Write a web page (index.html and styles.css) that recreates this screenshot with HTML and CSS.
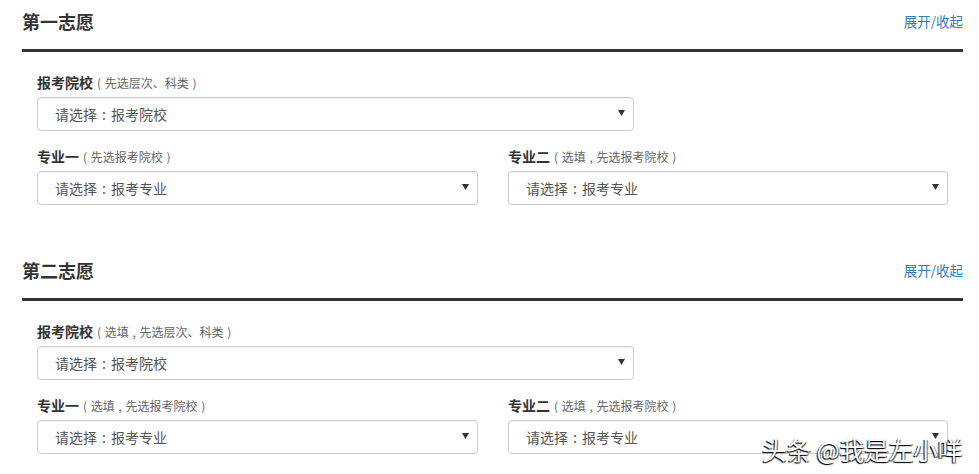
FILE: index.html
```html
<!DOCTYPE html>
<html lang="zh-CN">
<head>
<meta charset="utf-8">
<link rel="stylesheet" href="styles.css">
</head>
<body>
<div class="page">
  <section class="wish">
    <div class="wish-head">
      <h2 class="wish-title">第一志愿</h2>
      <a class="toggle">展开/收起</a>
    </div>
    <div class="wish-body">
      <div class="field field-school">
        <div class="label"><b>报考院校</b><span class="hint">( 先选层次、科类 )</span></div>
        <div class="select"><span>请选择<span class="colon">:</span>报考院校</span><svg class="caret" width="7" height="6" viewBox="0 0 7 6"><path d="M0 0H7L3.5 6Z" fill="#333"/></svg></div>
      </div>
      <div class="row">
        <div class="field">
          <div class="label"><b>专业一</b><span class="hint">( 先选报考院校 )</span></div>
          <div class="select"><span>请选择<span class="colon">:</span>报考专业</span><svg class="caret" width="7" height="6" viewBox="0 0 7 6"><path d="M0 0H7L3.5 6Z" fill="#333"/></svg></div>
        </div>
        <div class="field">
          <div class="label"><b>专业二</b><span class="hint">( 选填 , 先选报考院校 )</span></div>
          <div class="select"><span>请选择<span class="colon">:</span>报考专业</span><svg class="caret" width="7" height="6" viewBox="0 0 7 6"><path d="M0 0H7L3.5 6Z" fill="#333"/></svg></div>
        </div>
      </div>
    </div>
  </section>
  <section class="wish">
    <div class="wish-head">
      <h2 class="wish-title">第二志愿</h2>
      <a class="toggle">展开/收起</a>
    </div>
    <div class="wish-body">
      <div class="field field-school">
        <div class="label"><b>报考院校</b><span class="hint">( 选填 , 先选层次、科类 )</span></div>
        <div class="select"><span>请选择<span class="colon">:</span>报考院校</span><svg class="caret" width="7" height="6" viewBox="0 0 7 6"><path d="M0 0H7L3.5 6Z" fill="#333"/></svg></div>
      </div>
      <div class="row">
        <div class="field">
          <div class="label"><b>专业一</b><span class="hint">( 选填 , 先选报考院校 )</span></div>
          <div class="select"><span>请选择<span class="colon">:</span>报考专业</span><svg class="caret" width="7" height="6" viewBox="0 0 7 6"><path d="M0 0H7L3.5 6Z" fill="#333"/></svg></div>
        </div>
        <div class="field">
          <div class="label"><b>专业二</b><span class="hint">( 选填 , 先选报考院校 )</span></div>
          <div class="select"><span>请选择<span class="colon">:</span>报考专业</span><svg class="caret" width="7" height="6" viewBox="0 0 7 6"><path d="M0 0H7L3.5 6Z" fill="#333"/></svg></div>
        </div>
      </div>
    </div>
  </section>
</div>
<div class="watermark">头条 @我是左小咩</div>
</body>
</html>
```

FILE: styles.css
```css
html, body {
  margin: 0;
  padding: 0;
  background: #fff;
}
body {
  font-family: "Noto Sans CJK SC", "Liberation Sans", sans-serif;
  color: #333;
  width: 979px;
  height: 474px;
  overflow: hidden;
  position: relative;
}
.page {
  padding: 0 16px 0 22px;
  display: flex;
  flex-direction: column;
  gap: 44px;
}
.wish-head {
  display: flex;
  justify-content: space-between;
  align-items: center;
  height: 49px;
  border-bottom: 3px solid #333;
  box-sizing: content-box;
}
.wish-title {
  margin: 0;
  font-size: 18px;
  font-weight: bold;
  line-height: 26px;
  color: #333;
  position: relative;
  top: -4px;
}
.toggle {
  font-size: 13.5px;
  line-height: 20px;
  color: #337ab7;
  text-decoration: none;
  position: relative;
  top: -4px;
}
.wish-body {
  padding: 20px 0 0 15px;
}
.field-school {
  width: 597px;
  margin-bottom: 15px;
}
.row {
  display: grid;
  grid-template-columns: 441px 440px;
  column-gap: 30px;
}
.label {
  display: flex;
  align-items: center;
  height: 20px;
  margin-bottom: 5px;
  white-space: nowrap;
}
.label b {
  font-size: 14px;
  font-weight: bold;
  color: #333;
}
.hint {
  font-size: 12px;
  color: #666;
  margin-left: 4px;
  word-spacing: 1px;
}
.select {
  height: 34px;
  box-sizing: border-box;
  border: 1px solid #ccc;
  border-radius: 4px;
  display: flex;
  align-items: center;
  justify-content: space-between;
  padding: 0 8px 0 17px;
  font-size: 14px;
  color: #555;
  box-shadow: inset 0 1px 1px rgba(0,0,0,.05);
}
.colon {
  display: inline-block;
  width: 1em;
  text-align: center;
}
.caret {
  display: block;
  margin-top: -2px;
}
.watermark {
  position: absolute;
  left: 762px;
  top: 434px;
  font-size: 24.5px;
  line-height: 32px;
  color: #fff;
  white-space: nowrap;
  text-shadow: -1px 1px 1px #000, 1px 1px 1px rgba(0,0,0,.7);
}
```
